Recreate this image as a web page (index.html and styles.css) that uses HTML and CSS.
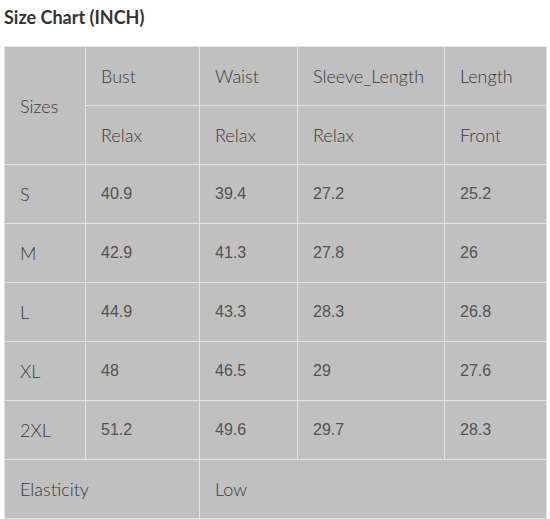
FILE: index.html
```html
<!DOCTYPE html>
<html>
<head>
<meta charset="utf-8">
<link rel="stylesheet" href="styles.css">
</head>
<body>
<div class="page">
  <h2 class="title">Size Chart (INCH)</h2>
  <table class="chart">
    <colgroup>
      <col class="c1"><col class="c2"><col class="c3"><col class="c4"><col class="c5">
    </colgroup>
    <tr><td rowspan="2">Sizes</td><td>Bust</td><td>Waist</td><td>Sleeve_Length</td><td>Length</td></tr>
    <tr><td>Relax</td><td>Relax</td><td>Relax</td><td>Front</td></tr>
    <tr><td>S</td><td class="num">40.9</td><td class="num">39.4</td><td class="num">27.2</td><td class="num">25.2</td></tr>
    <tr><td>M</td><td class="num">42.9</td><td class="num">41.3</td><td class="num">27.8</td><td class="num">26</td></tr>
    <tr><td>L</td><td class="num">44.9</td><td class="num">43.3</td><td class="num">28.3</td><td class="num">26.8</td></tr>
    <tr><td>XL</td><td class="num">48</td><td class="num">46.5</td><td class="num">29</td><td class="num">27.6</td></tr>
    <tr><td>2XL</td><td class="num">51.2</td><td class="num">49.6</td><td class="num">29.7</td><td class="num">28.3</td></tr>
    <tr><td colspan="2">Elasticity</td><td colspan="3">Low</td></tr>
  </table>
</div>
</body>
</html>
```

FILE: styles.css
```css
html, body {
  margin: 0;
  padding: 0;
  background: #ffffff;
}
.page {
  padding: 0 4px;
}
.title {
  margin: 0;
  padding-top: 6px;
  height: 46px;
  box-sizing: border-box;
  font-family: "Lato", "Liberation Sans", sans-serif;
  font-weight: 700;
  font-size: 18px;
  line-height: 22px;
  color: #333333;
}
.chart {
  border-collapse: collapse;
  table-layout: fixed;
  width: 542px;
  background: #c0c0c0;
  font-family: "Lato", "Liberation Sans", sans-serif;
  font-weight: 300;
  font-size: 18px;
  color: #3a3a3a;
}
.c1 { width: 81px; }
.c2 { width: 114px; }
.c3 { width: 98px; }
.c4 { width: 147px; }
.c5 { width: 102px; }
.chart td {
  border: 1px solid #e4e4e4;
  height: 59px;
  box-sizing: border-box;
  padding: 0 0 0 15px;
  vertical-align: middle;
  white-space: nowrap;
}
.chart .num {
  font-family: "Liberation Sans", Arial, sans-serif;
  font-weight: 400;
  font-size: 16px;
  color: #525252;
}
```
